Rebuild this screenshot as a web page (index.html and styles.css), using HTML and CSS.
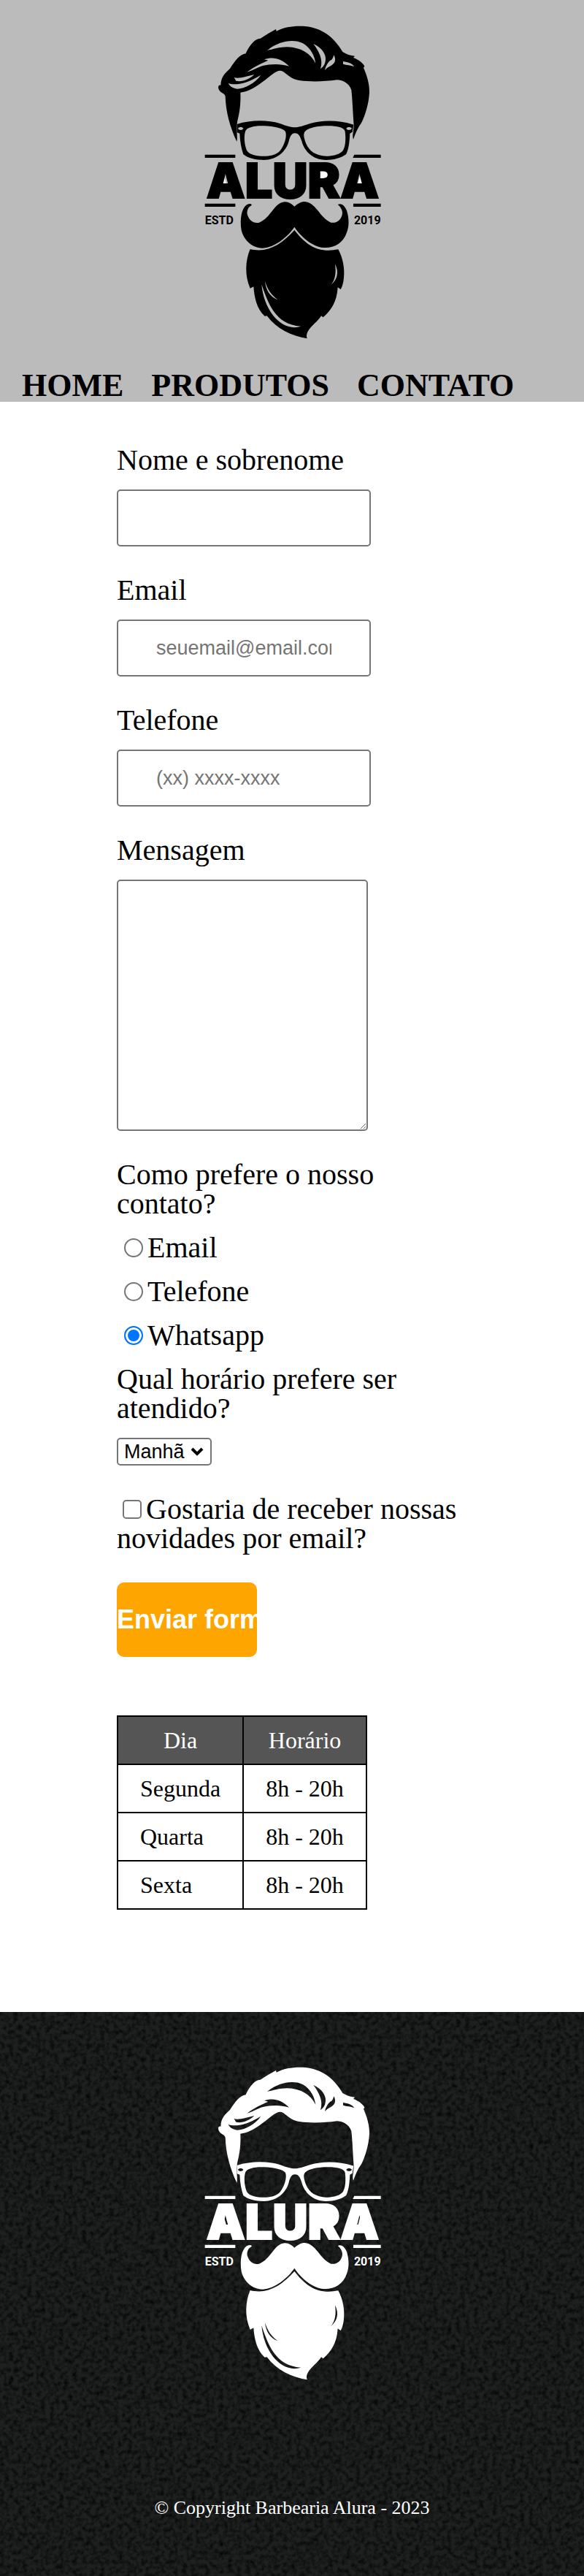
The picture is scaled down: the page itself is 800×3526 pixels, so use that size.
FILE: index.html
```html
<!DOCTYPE html>
<html lang="pt-br">
<head>
<meta charset="UTF-8">
<meta name="viewport" content="width=device-width">
<title>Contato - Barbearia Alura</title>
<link rel="stylesheet" href="styles.css">
</head>
<body>
<header class="header">
  <svg class="logo" viewBox="30 0 780 1380" role="img" aria-label="Barbearia Alura">
    <defs>
      <g id="logo-art">
        <path fill-rule="evenodd" d="M193 521C165 460 148 400 146 335C142 322 128 322 122 312C114 300 116 287 127 290C128 255 145 240 165 222C185 190 205 164 230 160C240 135 265 98 290 98C312 84 335 70 354 60L356 68C390 50 430 45 475 48C540 55 590 88 628 153C645 164 660 168 678 170L672 177C695 185 712 200 718 212L714 218C728 250 739 285 738 320C735 370 720 415 705 445C690 465 680 490 672 512C667 495 673 480 674 455C670 400 668 345 664 310C655 280 625 268 605 268C550 275 500 277 450 270C405 262 392 231 372 230C350 230 330 255 300 275C265 303 235 316 208 320C210 365 205 400 195 440C190 480 198 505 193 521ZM318 147C370 105 430 100 465 118C500 140 512 170 517 200C495 160 460 135 400 133C370 133 340 143 318 147ZM508 120C540 135 560 160 558 185C556 205 548 215 537 222C550 185 530 150 508 120ZM555 228C562 200 575 188 583 185C590 178 590 170 592 166C602 185 598 200 580 210C570 215 562 220 555 228ZM630 192C650 195 668 200 676 214C660 207 645 208 630 203ZM235 236C270 210 300 198 322 188L306 184C340 172 375 178 408 212C370 200 330 203 300 210C275 218 255 232 235 236ZM182 258C200 265 235 253 265 246C245 265 215 278 190 272ZM158 282C180 290 225 290 292 248C270 280 225 305 195 305C178 303 165 295 158 282Z"/>
        <path fill-rule="evenodd" d="M194 450C250 432 320 432 370 447C400 458 415 463 432 463C450 463 470 455 495 447C545 433 610 432 673 452L668 482L658 488C656 530 652 555 642 574C620 590 590 597 560 597C505 597 470 560 460 520C452 495 445 487 432 487C418 487 412 500 407 520C395 565 355 597 305 597C270 597 240 590 220 574C212 550 206 520 205 488L194 484ZM228 480C232 462 270 455 305 457C345 458 385 468 393 480C400 500 390 535 370 560C350 580 320 582 295 581C265 580 240 572 233 555C224 530 222 500 228 480ZM470 487C475 468 520 457 560 457C600 456 635 462 638 480C642 510 640 545 628 560C610 578 580 581 560 581C520 580 490 560 478 530C470 510 467 495 470 487ZM198 468C202 460 216 460 220 468C216 476 202 476 198 468ZM643 468C647 460 661 460 666 468C661 476 647 476 643 468Z"/>
        <path d="M62 575H187V588H62ZM676 575H785V588H670ZM62 776H187V789H62ZM672 776H785V789H672Z"/>
        <path fill="#fff" d="M137 650L158 722H118ZM703 650L724 722H684ZM530 630H572V690H530Z"/>
        <text class="logo-name" x="423" y="752">ALURA</text>
        <text class="logo-note" x="62" y="860">ESTD</text>
        <text class="logo-note logo-note-end" x="785" y="860">2019</text>
        <g transform="translate(0 540)">
          <path d="M430 248C450 232 460 228 472 228C520 232 530 290 580 314C605 318 625 300 627 275C627 260 618 248 608 240C625 232 640 250 646 268C655 300 655 330 645 355C630 400 590 420 550 417C500 412 455 370 430 332C400 375 350 415 300 419C250 418 220 380 212 345C205 300 212 255 235 240C248 234 258 238 253 244C240 250 234 265 236 280C245 308 262 318 285 314C335 295 345 232 390 229C405 228 420 238 430 248Z"/>
          <path fill-rule="evenodd" d="M248 423C320 440 375 405 430 345C480 410 530 440 610 424C630 460 637 505 633 540C631 565 625 580 620 588L608 580C605 640 580 675 548 703L540 697C525 725 470 755 482 790C420 780 355 750 317 697L308 698C275 670 265 620 262 577L248 584C225 530 228 470 248 423ZM597 484C615 520 605 550 580 570C598 550 602 520 597 484ZM309 555C320 590 335 612 362 631C330 620 312 590 309 555ZM295 568C320 640 350 735 457 740C380 765 305 680 295 568Z"/>
        </g>
      </g>
    </defs>
    <use href="#logo-art"/>
  </svg>
  <nav class="nav">
    <a href="#">Home</a>
    <a href="#">Produtos</a>
    <a href="#">Contato</a>
  </nav>
</header>

<main class="main">
  <form class="form">
    <label class="label" for="nome">Nome e sobrenome</label>
    <input class="field" type="text" id="nome">

    <label class="label" for="email">Email</label>
    <input class="field" type="email" id="email" placeholder="seuemail@email.com">

    <label class="label" for="telefone">Telefone</label>
    <input class="field" type="tel" id="telefone" placeholder="(xx) xxxx-xxxx">

    <label class="label" for="mensagem">Mensagem</label>
    <textarea class="message" id="mensagem"></textarea>

    <fieldset class="group">
      <legend class="label">Como prefere o nosso contato?</legend>
      <label class="label"><input class="choice" type="radio" name="contato">Email</label>
      <label class="label"><input class="choice" type="radio" name="contato">Telefone</label>
      <label class="label"><input class="choice" type="radio" name="contato" checked>Whatsapp</label>
    </fieldset>

    <label class="label" for="horario">Qual horário prefere ser atendido?</label>
    <div class="select-box">
      <select class="select" id="horario">
        <option>Manhã</option>
        <option>Tarde</option>
        <option>Noite</option>
      </select>
      <svg class="chevron" viewBox="0 0 18 12" aria-hidden="true"><path d="M2 2L9 9L16 2" fill="none" stroke="#000" stroke-width="4"/></svg>
    </div>

    <label class="newsletter"><input class="check" type="checkbox">Gostaria de receber nossas novidades por email?</label>

    <button class="submit" type="submit">Enviar formulário</button>
  </form>

  <table class="table">
    <thead>
      <tr><th>Dia</th><th>Horário</th></tr>
    </thead>
    <tbody>
      <tr><td>Segunda</td><td>8h - 20h</td></tr>
      <tr><td>Quarta</td><td>8h - 20h</td></tr>
      <tr><td>Sexta</td><td>8h - 20h</td></tr>
    </tbody>
  </table>
</main>

<footer class="footer">
  <svg class="texture" aria-hidden="true">
    <filter id="grain" x="0" y="0" width="100%" height="100%" color-interpolation-filters="sRGB">
      <feTurbulence type="fractalNoise" baseFrequency="0.16" numOctaves="2" seed="4"/>
      <feColorMatrix values="0 0 0 0 0  0 0 0 0 0  0 0 0 0 0  1.6 0 0 0 -0.6"/>
    </filter>
    <rect width="100%" height="100%" filter="url(#grain)"/>
  </svg>
  <svg class="logo logo-light" viewBox="30 0 780 1380" role="img" aria-label="Barbearia Alura"><use href="#logo-art"/></svg>
  <p class="copyright">© Copyright Barbearia Alura - 2023</p>
</footer>
</body>
</html>
```
FILE: styles.css
```css
* {
  box-sizing: border-box;
}

body {
  margin: 0;
  background: #fff;
  color: #000;
  font-family: "Liberation Serif", "Times New Roman", serif;
  font-size: 32px;
  line-height: 1;
}

.header {
  display: flex;
  flex-direction: column;
  gap: 26px;
  padding-top: 20px;
  background: #bbb;
}

.logo {
  display: block;
  width: 260px;
  height: 460px;
  margin: 0 auto;
  color: #000;
  fill: currentColor;
}

.logo-light {
  position: relative;
  color: #fff;
}

.logo-name {
  font-family: Inter, sans-serif;
  font-size: 200px;
  font-weight: 900;
  text-anchor: middle;
  stroke: currentColor;
  stroke-width: 6px;
}

.logo-note {
  font-family: Roboto, sans-serif;
  font-size: 48px;
  font-weight: 700;
}

.logo-note-end {
  text-anchor: end;
}

.nav {
  display: flex;
  flex-wrap: wrap;
  gap: 38px;
  padding: 0 30px;
}

.nav a {
  color: #000;
  font-size: 44px;
  font-weight: 700;
  text-decoration: none;
  text-transform: uppercase;
}

.main {
  width: 60%;
  margin: 0 auto;
  padding: 60px 0 140px;
}

.form {
  margin-bottom: 80px;
}

.label {
  display: block;
  margin-bottom: 20px;
  padding: 0;
  font-size: 40px;
}

.field,
.message {
  display: block;
  margin: 0 0 40px;
  border: 2px solid #767676;
  border-radius: 5px;
  background: #fff;
  font-family: "Liberation Sans", Arial, sans-serif;
  font-size: 27px;
}

.field {
  width: 348px;
  height: 78px;
  padding: 0 52px;
}

.field::placeholder {
  color: #757575;
}

.message {
  width: 344px;
  height: 344px;
  padding: 4px;
}

.group {
  margin: 0;
  padding: 0;
  border: 0;
}

.choice,
.check {
  width: 26px;
  height: 26px;
  appearance: none;
  border: 2px solid #767676;
  background: #fff;
}

.choice {
  margin: 6px 6px 0 10px;
  border-radius: 50%;
}

.choice:checked {
  border-color: #0075ff;
  background: #0075ff;
  box-shadow: inset 0 0 0 3px #fff;
}

.check {
  margin: 6px 6px 0 8px;
  border-radius: 5px;
}

.check:checked {
  border-color: #0075ff;
  background: #0075ff;
}

.select-box {
  position: relative;
  width: 130px;
  margin-bottom: 40px;
}

.select {
  display: block;
  width: 100%;
  height: 38px;
  padding: 0 8px;
  appearance: none;
  border: 2px solid #767676;
  border-radius: 5px;
  background: #fff;
  color: #000;
  font-family: "Liberation Sans", Arial, sans-serif;
  font-size: 27px;
}

.chevron {
  position: absolute;
  top: 13px;
  right: 11px;
  width: 18px;
  height: 12px;
  pointer-events: none;
}

.newsletter {
  display: block;
  margin-bottom: 40px;
  font-size: 40px;
}

.submit {
  display: block;
  width: 40%;
  height: 102px;
  padding: 0;
  overflow: hidden;
  border: 0;
  border-radius: 10px;
  background: orange;
  color: #fff;
  font-family: "Liberation Sans", Arial, sans-serif;
  font-size: 36px;
  font-weight: 700;
  text-align: left;
  white-space: nowrap;
}

.table {
  border-collapse: collapse;
}

.table th,
.table td {
  padding: 16px 30px;
  border: 2px solid #000;
  font-weight: 400;
}

.table th {
  background: #555;
  color: #fff;
}

.footer {
  position: relative;
  padding: 60px 0 80px;
  background: #1e201f;
}

.texture {
  position: absolute;
  top: 0;
  left: 0;
  width: 100%;
  height: 100%;
}

.copyright {
  position: relative;
  margin: 146px 0 0;
  color: #fff;
  font-size: 26px;
  text-align: center;
}
```
